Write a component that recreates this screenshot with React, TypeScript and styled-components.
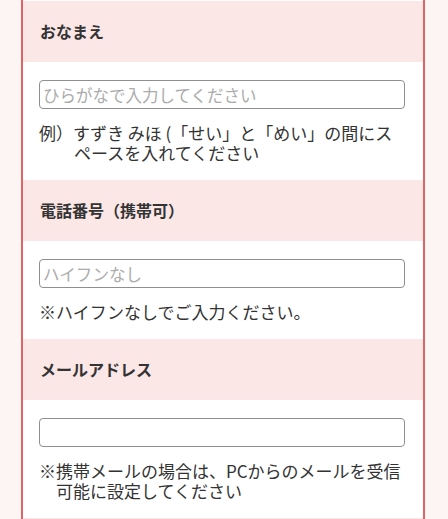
import React from "react";
import styled, { createGlobalStyle } from "styled-components";

const GlobalStyle = createGlobalStyle`
  html, body {
    margin: 0;
    padding: 0;
    background-color: #fdf4f4;
  }
  body {
    font-family: "Noto Sans CJK JP", "Noto Sans", sans-serif;
    color: #333;
    text-spacing-trim: space-all;
  }
`;

const Form = styled.div`
  width: 400px;
  margin: 0 21px;
  padding-top: 1px;
  background-color: #fff;
  border-left: 2px solid #e06464;
  border-right: 2px solid #e06464;
`;

const Heading = styled.div`
  height: 61px;
  display: flex;
  align-items: center;
  padding-left: 17px;
  padding-bottom: 2px;
  box-sizing: border-box;
  background-color: #fbe7e6;
  font-size: 16px;
  font-weight: 700;
  color: #333;
`;

const Body = styled.div`
  display: flex;
  flex-direction: column;
  gap: 14px;
  padding: 18px 18px 17px 16px;
  background-color: #fff;
`;

const Field = styled.input`
  box-sizing: border-box;
  width: 100%;
  height: 29px;
  margin: 0;
  padding: 0 3px;
  border: 1px solid #8f8f8f;
  border-radius: 4px;
  font-family: inherit;
  font-size: 16.5px;
  color: #333;
  background: #fff;
  outline: none;
  &::placeholder {
    color: #ababab;
  }
`;

const Note = styled.p<{ $indent: number }>`
  margin: 0;
  padding-left: ${(p) => p.$indent}px;
  text-indent: -${(p) => p.$indent}px;
  font-size: 17px;
  line-height: 20px;
  color: #333;
`;

interface Section {
  title: string;
  placeholder: string;
  note: string;
  indent: number;
  type: string;
}

const sections: Section[] = [
  {
    title: "おなまえ",
    placeholder: "ひらがなで入力してください",
    note: "例）すずき みほ (「せい」と「めい」の間にスペースを入れてください",
    indent: 35,
    type: "text",
  },
  {
    title: "電話番号（携帯可）",
    placeholder: "ハイフンなし",
    note: "※ハイフンなしでご入力ください。",
    indent: 17,
    type: "tel",
  },
  {
    title: "メールアドレス",
    placeholder: "",
    note: "※携帯メールの場合は、PCからのメールを受信可能に設定してください",
    indent: 17,
    type: "email",
  },
];

const App: React.FC = () => {
  return (
    <>
      <GlobalStyle />
      <Form>
        {sections.map((s) => (
          <React.Fragment key={s.title}>
            <Heading>{s.title}</Heading>
            <Body>
              <Field type={s.type} placeholder={s.placeholder} />
              <Note $indent={s.indent}>{s.note}</Note>
            </Body>
          </React.Fragment>
        ))}
        <Heading />
      </Form>
    </>
  );
};

export default App;
